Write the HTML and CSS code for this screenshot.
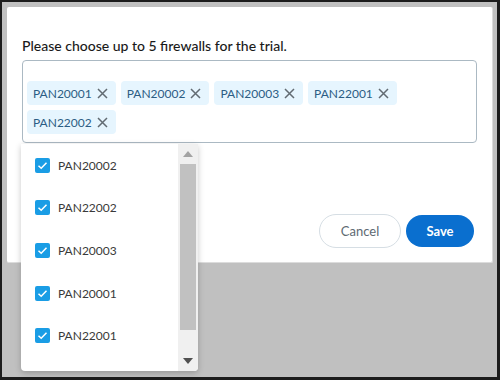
FILE: index.html
```html
<!DOCTYPE html>
<html>
<head>
<meta charset="utf-8">
<link rel="stylesheet" href="styles.css">
</head>
<body>
<div class="frame">
  <div class="modal">
    <p class="title">Please choose up to 5 firewalls for the trial.</p>
    <div class="picker">
      <div class="chips">
        <span class="chip">PAN20001<svg class="x" viewBox="0 0 11 11"><path d="M1 1L10 10M10 1L1 10"/></svg></span>
        <span class="chip">PAN20002<svg class="x" viewBox="0 0 11 11"><path d="M1 1L10 10M10 1L1 10"/></svg></span>
        <span class="chip">PAN20003<svg class="x" viewBox="0 0 11 11"><path d="M1 1L10 10M10 1L1 10"/></svg></span>
        <span class="chip">PAN22001<svg class="x" viewBox="0 0 11 11"><path d="M1 1L10 10M10 1L1 10"/></svg></span>
        <span class="chip">PAN22002<svg class="x" viewBox="0 0 11 11"><path d="M1 1L10 10M10 1L1 10"/></svg></span>
      </div>
      <div class="menu">
        <ul class="options">
          <li class="option"><span class="check"><svg viewBox="0 0 15 15"><path d="M3.5 7.8L6.2 10.3L11.5 4.8"/></svg></span>PAN20002</li>
          <li class="option"><span class="check"><svg viewBox="0 0 15 15"><path d="M3.5 7.8L6.2 10.3L11.5 4.8"/></svg></span>PAN22002</li>
          <li class="option"><span class="check"><svg viewBox="0 0 15 15"><path d="M3.5 7.8L6.2 10.3L11.5 4.8"/></svg></span>PAN20003</li>
          <li class="option"><span class="check"><svg viewBox="0 0 15 15"><path d="M3.5 7.8L6.2 10.3L11.5 4.8"/></svg></span>PAN20001</li>
          <li class="option"><span class="check"><svg viewBox="0 0 15 15"><path d="M3.5 7.8L6.2 10.3L11.5 4.8"/></svg></span>PAN22001</li>
        </ul>
        <div class="scrollbar">
          <div class="arrow-box"><span class="arrow up"></span></div>
          <div class="thumb"></div>
          <div class="arrow-box bottom"><span class="arrow down"></span></div>
        </div>
      </div>
    </div>
    <div class="actions">
      <button class="btn cancel">Cancel</button>
      <button class="btn save">Save</button>
    </div>
  </div>
</div>
</body>
</html>
```

FILE: styles.css
```css
html, body {
  margin: 0;
  padding: 0;
  background: #c0c0c0;
}

.frame {
  box-sizing: border-box;
  width: 500px;
  height: 380px;
  border-style: solid;
  border-color: #1c1c1c;
  border-width: 2px 3px 3px 2px;
  background: #c0c0c0;
  padding: 5px 0 0 5px;
  font-family: Lato, "Liberation Sans", sans-serif;
}

.modal {
  box-sizing: border-box;
  width: 486px;
  height: 256px;
  background: #ffffff;
  border-right: 1px solid #dcdcdc;
  border-bottom: 1px solid #dcdcdc;
  border-radius: 2px;
  padding: 29px 15px 15px 15px;
}

.title {
  margin: 0 0 4px 0;
  font-size: 14px;
  font-weight: 500;
  line-height: 20px;
  color: #1a1a1a;
}

.picker {
  position: relative;
  border: 1px solid #abb9c3;
  border-radius: 4px;
  padding: 20px 4px 8px 4px;
}

.chips {
  display: flex;
  flex-wrap: wrap;
  gap: 5px;
}

.chip {
  display: flex;
  align-items: center;
  gap: 5px;
  height: 24px;
  padding: 0 8px 0 6px;
  background: #e6f5fe;
  border-radius: 4px;
  font-size: 12px;
  color: #2c5d84;
}

.x {
  width: 11px;
  height: 11px;
  fill: none;
  stroke: #626b72;
  stroke-width: 1.5;
}

.menu {
  position: absolute;
  top: calc(100% + 2px);
  left: -2px;
  width: 177px;
  height: 227px;
  display: flex;
  background: #ffffff;
  border-radius: 0 0 4px 4px;
  box-shadow: 0 2px 6px rgba(0, 0, 0, 0.22);
  overflow: hidden;
  z-index: 2;
}

.options {
  flex: 1;
  list-style: none;
  margin: 0;
  padding: 0;
}

.option {
  display: flex;
  align-items: center;
  gap: 8px;
  height: 42.6px;
  padding-left: 14px;
  font-size: 12px;
  color: #3a3a3a;
}

.check {
  width: 15px;
  height: 15px;
  border-radius: 2px;
  background: #1a9de5;
  display: flex;
}

.check svg {
  width: 15px;
  height: 15px;
  fill: none;
  stroke: #ffffff;
  stroke-width: 1.5;
}

.scrollbar {
  width: 20px;
  background: #f0f0f0;
  display: flex;
  flex-direction: column;
}

.arrow-box {
  height: 20px;
  display: flex;
  align-items: center;
  justify-content: center;
}

.arrow-box.bottom {
  margin-top: auto;
}

.arrow {
  width: 0;
  height: 0;
  border-left: 5px solid transparent;
  border-right: 5px solid transparent;
}

.arrow.up {
  border-bottom: 6px solid #a3a3a3;
}

.arrow.down {
  border-top: 6px solid #505050;
}

.thumb {
  height: 166px;
  margin: 0 2px;
  background: #c1c1c1;
}

.actions {
  display: flex;
  justify-content: flex-end;
  align-items: center;
  gap: 5px;
  margin-top: 71px;
  padding-right: 3px;
}

.btn {
  font-family: Lato, "Liberation Sans", sans-serif;
  font-size: 13px;
  cursor: pointer;
  padding: 0;
}

.cancel {
  width: 82px;
  height: 34px;
  border: 1px solid #d6dee4;
  border-radius: 17px;
  background: #ffffff;
  color: #5e6a72;
}

.save {
  width: 68px;
  height: 32px;
  border: none;
  border-radius: 16px;
  background: #0a6fcf;
  color: #ffffff;
  font-weight: 700;
}
```
